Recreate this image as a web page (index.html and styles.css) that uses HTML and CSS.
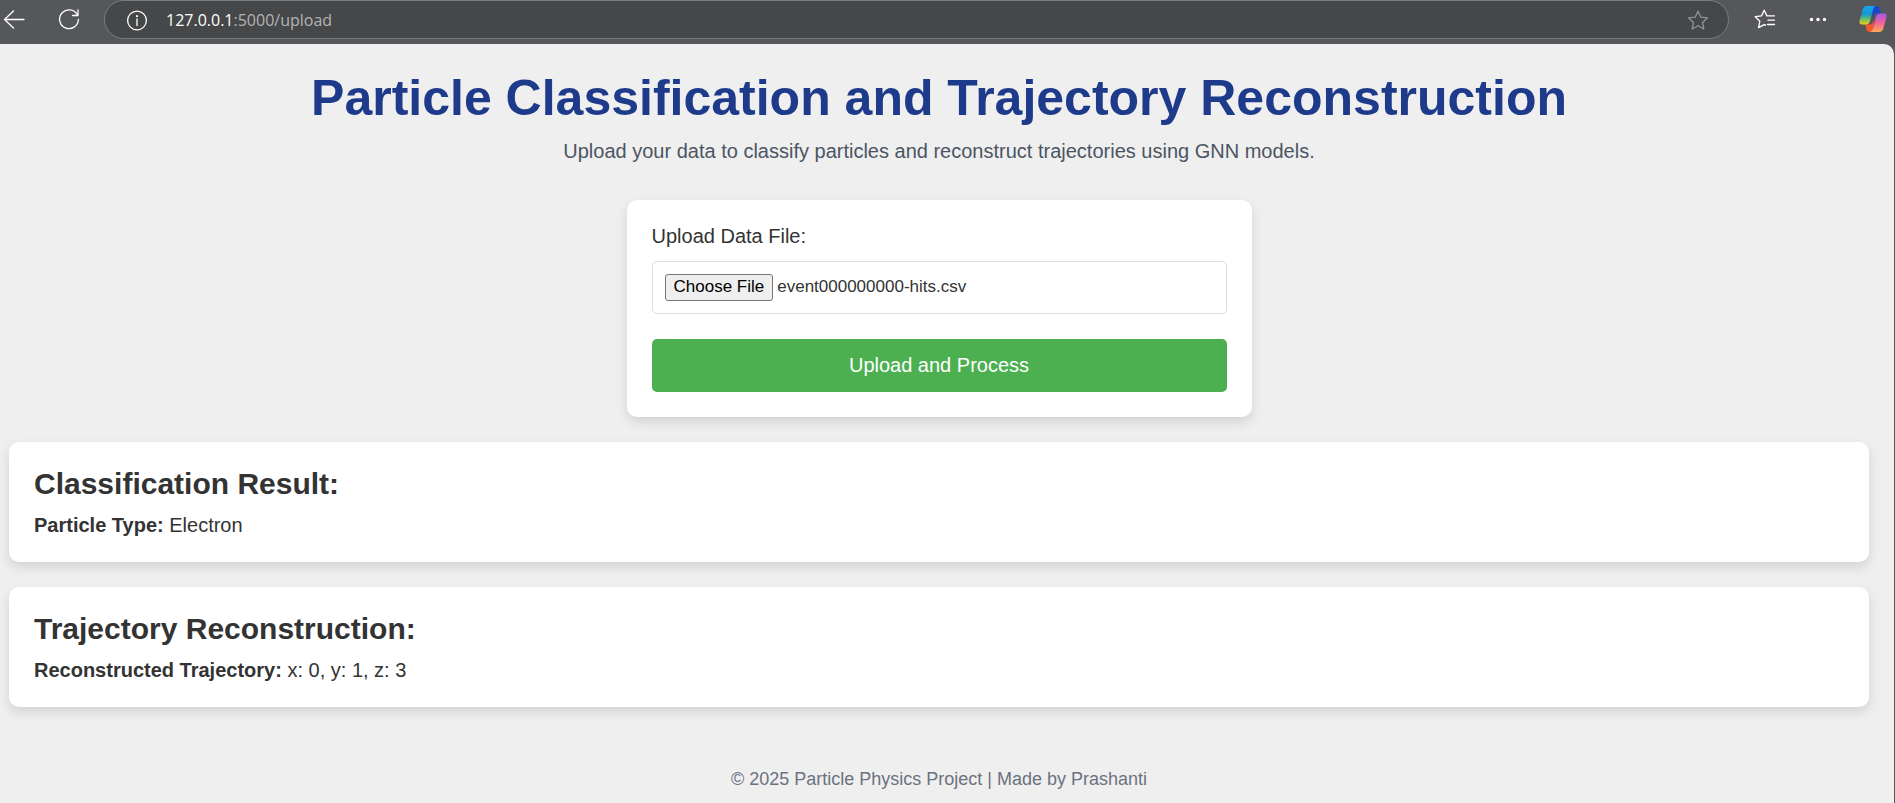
FILE: index.html
```html
<!DOCTYPE html>
<html lang="en">
<head>
<meta charset="utf-8">
<title>Particle Classification and Trajectory Reconstruction</title>
<link rel="stylesheet" href="styles.css">
</head>
<body>
<div class="toolbar">
  <button class="tool" type="button" aria-label="Back">
    <svg class="icon" viewBox="0 0 24 24"><path d="M22 12.500H2.500M11.500 4 2.500 12.500l9 8.500"/></svg>
  </button>
  <button class="tool" type="button" aria-label="Refresh">
    <svg class="icon" viewBox="0 0 24 24"><path d="M20.500 8.200A9.400 9.400 0 1 0 21.400 12.500M21 3v5.500h-5.500"/></svg>
  </button>
  <div class="address">
    <svg class="icon" viewBox="0 0 24 24"><circle cx="12" cy="12.500" r="9.400"/><path d="M12 11v6.500"/><circle class="fill" cx="12" cy="8.200" r="1.100"/></svg>
    <span class="url"><span class="host">127.0.0.1</span>:5000/upload</span>
    <button class="tool star" type="button" aria-label="Add to favorites">
      <svg class="icon" viewBox="0 0 24 24"><path d="M12 3.200l2.700 5.900 6.700.8-4.900 4.500 1.300 6.600L12 17.800 6.200 21l1.300-6.600-4.900-4.500 6.700-.8z"/></svg>
    </button>
  </div>
  <div class="actions">
    <button class="tool" type="button" aria-label="Favorites">
      <svg class="icon" viewBox="0 0 24 24"><path d="M12.500 18.200 11.200 17.600 5.600 20.600 6.800 14.200 2.200 9.700 8.500 8.900 11.200 3.200 13.900 8.900H21.500M15 13.200h6.500M14.500 17.500h7"/></svg>
    </button>
    <button class="tool" type="button" aria-label="Settings and more">
      <svg class="icon" viewBox="0 0 24 24"><g class="fill"><circle cx="5.500" cy="12.500" r="1.700"/><circle cx="12" cy="12.500" r="1.700"/><circle cx="18.500" cy="12.500" r="1.700"/></g></svg>
    </button>
    <button class="tool" type="button" aria-label="Copilot">
      <svg class="copilot" viewBox="0 0 28 26">
        <defs>
          <linearGradient id="cl" x1="0" y1="0" x2="0" y2="1"><stop offset="0" stop-color="#12a5ee"/><stop offset=".45" stop-color="#1698cf"/><stop offset=".7" stop-color="#62bd68"/><stop offset="1" stop-color="#f5cf13"/></linearGradient>
          <linearGradient id="cr" x1="0" y1="0" x2="0" y2="1"><stop offset="0" stop-color="#a857ec"/><stop offset=".5" stop-color="#f2609c"/><stop offset="1" stop-color="#ffac55"/></linearGradient>
        </defs>
        <path fill="#1746d1" d="M14 0h3c2 0 3 1 3.500 2.700L21.800 7.500H18c-3 0-4 2-5 5z"/>
        <path fill="#f4582e" d="M14 26h-3c-2 0-3-1-3.500-2.700L6.200 18.500H10c3 0 4-2 5-5z"/>
        <path fill="url(#cl)" d="M8 0h9.500c-2 0-3 1.500-3.500 3.500L11 15c-.7 2.500-2 3.500-4 3.500H3.500C.5 18.500 0 16.500.7 14L3.500 4C4.300 1.200 5.500 0 8 0z"/>
        <path fill="url(#cr)" d="M20 26h-9.500c2 0 3-1.500 3.500-3.500L17 11c.7-2.500 2-3.500 4-3.500h3.500c3 0 3.500 2 2.800 4.500L24.500 22c-.8 2.800-2 4-4.500 4z"/>
      </svg>
    </button>
  </div>
</div>
<div class="page">
  <header class="header">
    <h1>Particle Classification and Trajectory Reconstruction</h1>
    <p>Upload your data to classify particles and reconstruct trajectories using GNN models.</p>
  </header>
  <main class="main">
    <form class="card upload">
      <label for="file">Upload Data File:</label>
      <input class="file" type="file" id="file" name="file" accept=".csv">
      <button class="submit" type="button">Upload and Process</button>
    </form>
    <section class="card">
      <h2>Classification Result:</h2>
      <p><strong>Particle Type:</strong> Electron</p>
    </section>
    <section class="card">
      <h2>Trajectory Reconstruction:</h2>
      <p><strong>Reconstructed Trajectory:</strong> x: 0, y: 1, z: 3</p>
    </section>
  </main>
  <footer class="footer">© 2025 Particle Physics Project | Made by Prashanti</footer>
</div>
<script src="script.js"></script>
</body>
</html>
```
FILE: styles.css
```css
* {
  box-sizing: border-box;
}

body {
  margin: 0;
  min-height: 100vh;
  display: flex;
  flex-direction: column;
  background: #56575b;
  color: #333;
  font-family: Arial, "Liberation Sans", sans-serif;
  font-size: 20px;
}

h1, h2, p {
  margin: 0;
}

/* Browser toolbar */
.toolbar {
  display: flex;
  align-items: flex-start;
  height: 44px;
  padding-right: 8px;
}

.tool {
  display: flex;
  align-items: center;
  justify-content: center;
  height: 38px;
  padding: 0;
  border: 0;
  background: none;
  color: #fff;
}

.toolbar > .tool {
  width: 28px;
  margin-right: 27px;
}

.icon {
  flex: none;
  width: 24px;
  height: 24px;
  fill: none;
  stroke: currentColor;
  stroke-width: 1.3;
  stroke-linecap: round;
  stroke-linejoin: round;
}

.icon .fill {
  fill: currentColor;
  stroke: none;
}

.address {
  flex: 1;
  display: flex;
  align-items: center;
  height: 39px;
  margin-left: -6px;
  padding: 0 18px 0 20px;
  border: 1px solid #7b7c7f;
  border-radius: 20px;
  background: #464749;
  color: #fff;
}

.url {
  flex: 1;
  margin-left: 17px;
  color: #b3b3b4;
  font-family: "Segoe UI", "Open Sans", sans-serif;
  font-size: 16px;
  line-height: 24px;
}

.host {
  color: #fff;
}

.star {
  color: #929395;
}

.actions {
  display: flex;
  gap: 29px;
  margin-left: 24px;
}

.copilot {
  width: 28px;
  height: 26px;
}

/* Page */
.page {
  flex: 1;
  margin-right: 1px;
  padding: 25px 25px 0 9px;
  border-top-right-radius: 10px;
  background: #efefef;
}

.header {
  text-align: center;
}

.header h1 {
  color: #1e3a8a;
  font-size: 50px;
  line-height: 58px;
}

.header p {
  margin-top: 12px;
  color: #4b5563;
  line-height: 24px;
}

.main {
  display: flex;
  flex-direction: column;
  gap: 25px;
  margin-top: 37px;
}

.card {
  padding: 25px;
  border-radius: 10px;
  background: #fff;
  box-shadow: 0 5px 12px rgba(0, 0, 0, 0.12);
}

.card h2 {
  font-size: 30px;
  line-height: 34px;
}

.card p {
  margin-top: 12px;
  line-height: 24px;
}

.upload {
  display: flex;
  flex-direction: column;
  align-self: center;
  width: 100%;
  max-width: 625px;
}

.upload label {
  line-height: 22px;
}

.file {
  width: 100%;
  margin-top: 14px;
  padding: 12px;
  border: 1px solid #ddd;
  border-radius: 5px;
  color: #333;
  font-family: inherit;
  font-size: 17px;
}

.file::file-selector-button {
  height: 27px;
  padding: 0 8px 2px;
  border: 1px solid #767676;
  border-radius: 3px;
  background: #efefef;
  color: #000;
  font: inherit;
}

.submit {
  margin-top: 25px;
  padding: 14px;
  border: 0;
  border-radius: 5px;
  background: #4caf50;
  color: #fff;
  font-family: inherit;
  font-size: 20px;
  line-height: 25px;
}

.footer {
  margin-top: 62px;
  color: #6b7280;
  font-size: 18px;
  line-height: 21px;
  text-align: center;
}
```
FILE: script.js
```js
const transfer = new DataTransfer();
transfer.items.add(new File([""], "event000000000-hits.csv", { type: "text/csv" }));
document.getElementById("file").files = transfer.files;
```
